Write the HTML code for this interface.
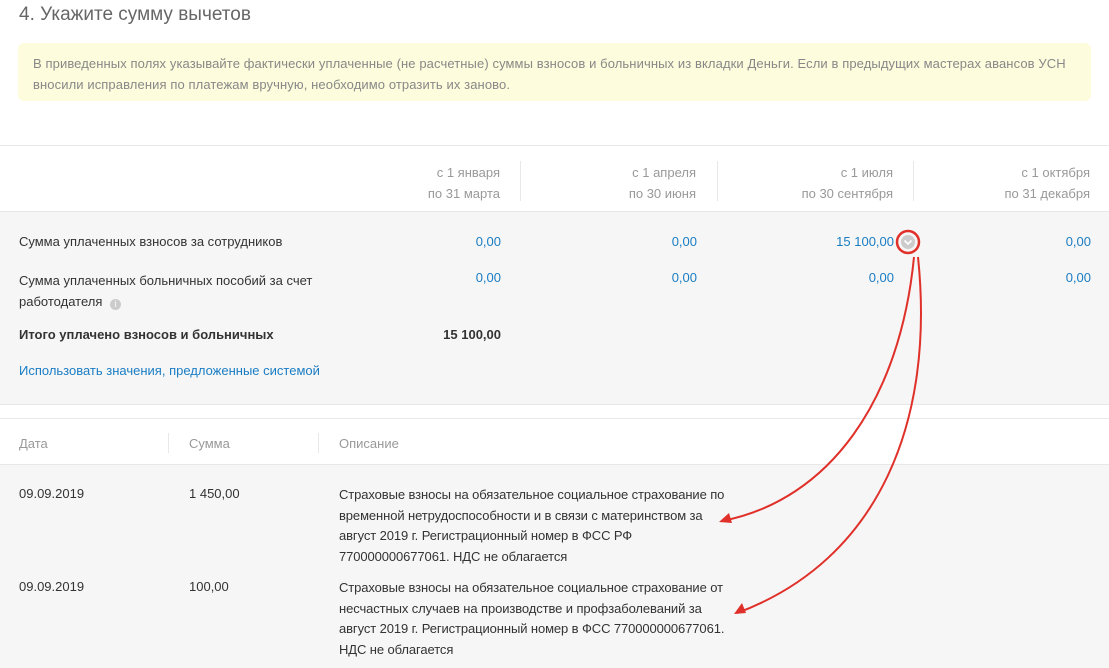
<!DOCTYPE html>
<html><head><meta charset="utf-8"><style>
body{margin:0;width:1109px;height:667px;overflow:hidden;background:#fff;font-family:"Liberation Sans",sans-serif;font-size:13px;color:#333;position:relative}
.a{position:absolute;white-space:nowrap}
.r{text-align:right}
.g{color:#999}
.b{color:#1a7dc4}
</style></head><body>
<div class="a" style="left:19px;top:4px;font-size:19px;color:#666">4. Укажите сумму вычетов</div>
<div class="a" style="left:18px;top:43px;width:1073px;height:58px;background:#fdfcdc;border-radius:6px"></div>
<div class="a" style="left:33px;top:53px;color:#888;line-height:21px;letter-spacing:0.1px">В приведенных полях указывайте фактически уплаченные (не расчетные) суммы взносов и больничных из вкладки Деньги. Если в предыдущих мастерах авансов УСН<br>вносили исправления по платежам вручную, необходимо отразить их заново.</div>
<div class="a" style="left:0;top:145px;width:1109px;height:1px;background:#e8e8e8"></div>
<div class="a r g" style="left:300px;width:200px;top:162px;line-height:21px">с 1 января<br>по 31 марта</div>
<div class="a r g" style="left:496px;width:200px;top:162px;line-height:21px">с 1 апреля<br>по 30 июня</div>
<div class="a r g" style="left:693px;width:200px;top:162px;line-height:21px">с 1 июля<br>по 30 сентября</div>
<div class="a r g" style="left:890px;width:200px;top:162px;line-height:21px">с 1 октября<br>по 31 декабря</div>
<div class="a" style="left:520px;top:161px;width:1px;height:40px;background:#e8e8e8"></div>
<div class="a" style="left:717px;top:161px;width:1px;height:40px;background:#e8e8e8"></div>
<div class="a" style="left:913px;top:161px;width:1px;height:40px;background:#e8e8e8"></div>
<div class="a" style="left:0;top:211px;width:1109px;height:192px;background:#f6f6f6;border-top:1px solid #e8e8e8;border-bottom:1px solid #e8e8e8"></div>
<div class="a" style="left:19px;top:234px">Сумма уплаченных взносов за сотрудников</div>
<div class="a r b" style="left:300px;width:201px;top:234px">0,00</div>
<div class="a r b" style="left:496px;width:201px;top:234px">0,00</div>
<div class="a r b" style="left:693px;width:201px;top:234px">15 100,00</div>
<div class="a r b" style="left:890px;width:201px;top:234px">0,00</div>
<div class="a r b" style="left:300px;width:201px;top:270px">0,00</div>
<div class="a r b" style="left:496px;width:201px;top:270px">0,00</div>
<div class="a r b" style="left:693px;width:201px;top:270px">0,00</div>
<div class="a r b" style="left:890px;width:201px;top:270px">0,00</div>
<div class="a" style="left:19px;top:270px;line-height:21px">Сумма уплаченных больничных пособий за счет<br>работодателя <span style="display:inline-block;width:11px;height:11px;border-radius:50%;background:#ccc;color:#fff;font-size:9px;text-align:center;line-height:11px;vertical-align:-1px;margin-left:4px">i</span></div>
<div class="a" style="left:19px;top:327px;font-weight:bold">Итого уплачено взносов и больничных</div>
<div class="a r" style="left:300px;width:201px;top:327px;font-weight:bold">15 100,00</div>
<div class="a b" style="left:19px;top:363px">Использовать значения, предложенные системой</div>
<div class="a" style="left:0;top:418px;width:1109px;height:1px;background:#e8e8e8"></div>
<div class="a g" style="left:19px;top:436px">Дата</div>
<div class="a g" style="left:189px;top:436px">Сумма</div>
<div class="a g" style="left:339px;top:436px">Описание</div>
<div class="a" style="left:168px;top:433px;width:1px;height:20px;background:#e8e8e8"></div>
<div class="a" style="left:318px;top:433px;width:1px;height:20px;background:#e8e8e8"></div>
<div class="a" style="left:0;top:464px;width:1109px;height:203px;background:#f6f6f6;border-top:1px solid #e8e8e8"></div>
<div class="a" style="left:19px;top:486px">09.09.2019</div>
<div class="a" style="left:189px;top:486px">1 450,00</div>
<div class="a" style="left:339px;top:485px;line-height:20.5px;letter-spacing:-0.1px">Страховые взносы на обязательное социальное страхование по<br>временной нетрудоспособности и в связи с материнством за<br>август 2019 г. Регистрационный номер в ФСС РФ<br>770000000677061. НДС не облагается</div>
<div class="a" style="left:19px;top:579px">09.09.2019</div>
<div class="a" style="left:189px;top:579px">100,00</div>
<div class="a" style="left:339px;top:578px;line-height:20.5px;letter-spacing:-0.1px">Страховые взносы на обязательное социальное страхование от<br>несчастных случаев на производстве и профзаболеваний за<br>август 2019 г. Регистрационный номер в ФСС 770000000677061.<br>НДС не облагается</div>
<svg class="a" style="left:0;top:0" width="1109" height="667">
<circle cx="908" cy="242" r="7" fill="#ccc"/>
<path d="M904.5 240.5 l3.5 3.5 l3.5 -3.5" fill="none" stroke="#fff" stroke-width="1.6"/>
<circle cx="908" cy="242" r="11" fill="none" stroke="#e0302a" stroke-width="2.5"/>
<path d="M914 257 C900 400 830 500 722 521" fill="none" stroke="#e0302a" stroke-width="2"/>
<path d="M719 522 l10 -9 l3 10 z" fill="#e0302a"/>
<path d="M918 257 C935 420 880 560 737 613" fill="none" stroke="#e0302a" stroke-width="2"/>
<path d="M734 614 l8 -11 l4 10 z" fill="#e0302a"/>
</svg>
</body></html>
